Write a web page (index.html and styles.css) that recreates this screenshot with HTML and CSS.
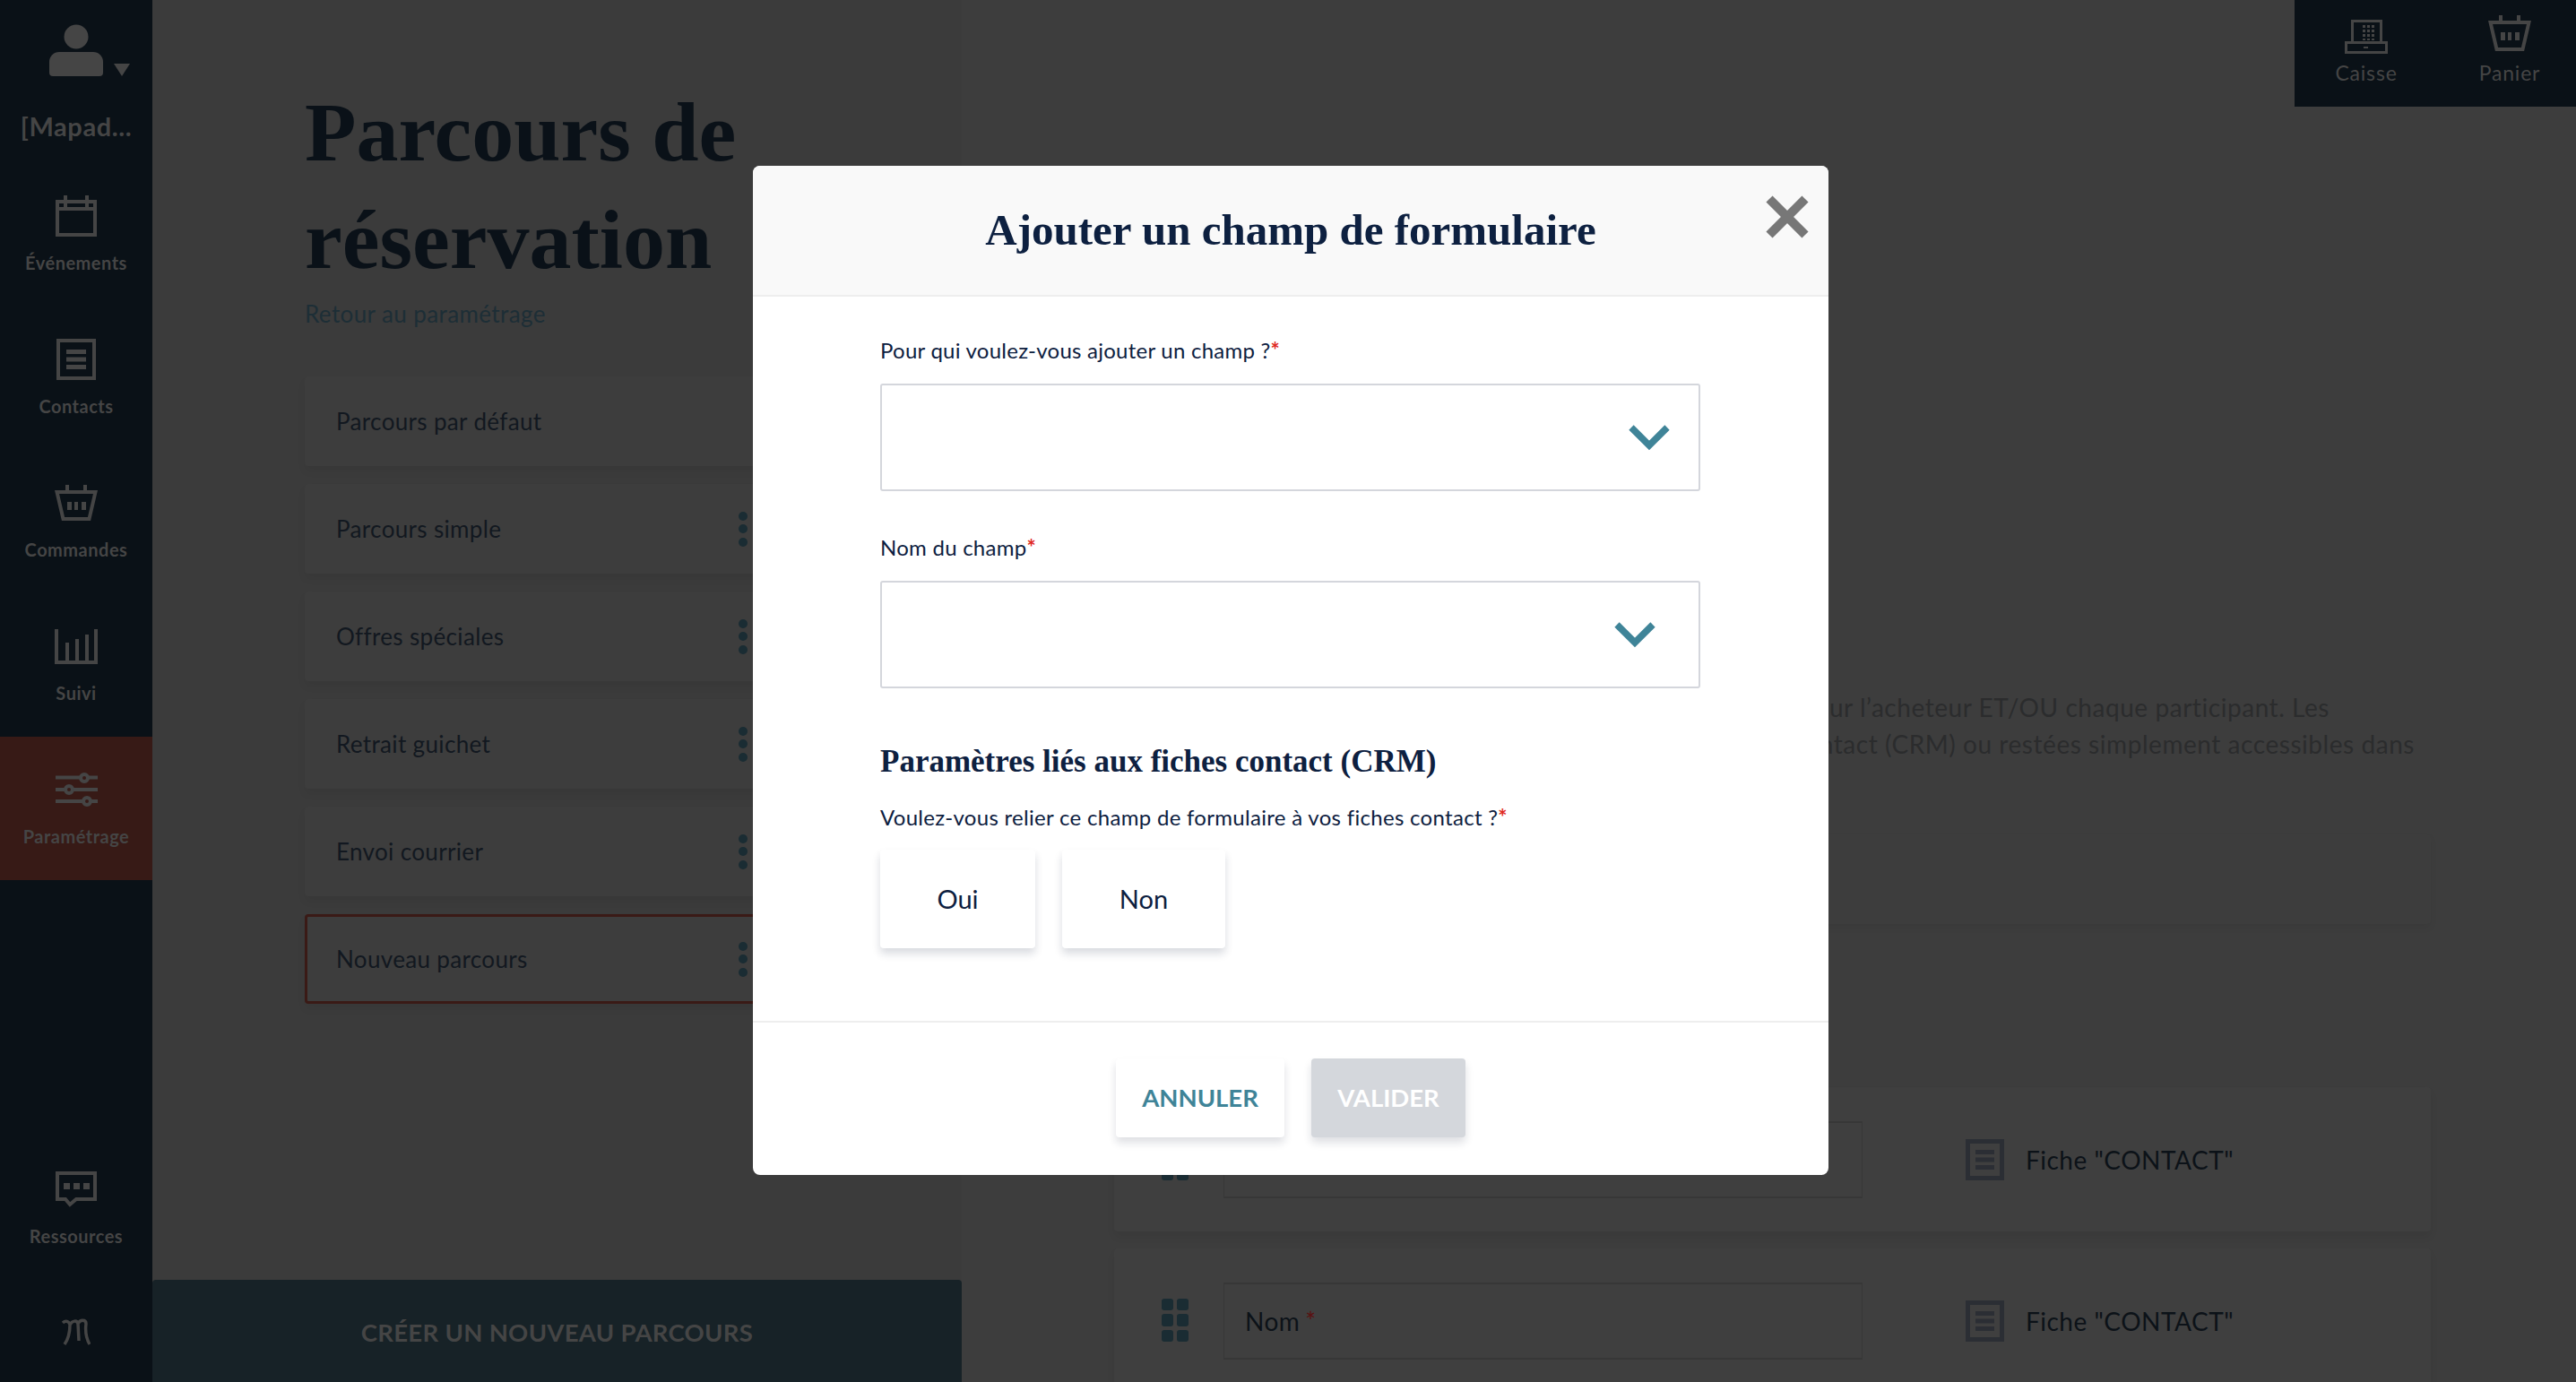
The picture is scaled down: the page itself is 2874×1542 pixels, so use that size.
FILE: index.html
```html
<!DOCTYPE html>
<html lang="fr">
<head>
<meta charset="utf-8">
<title>Parcours de réservation</title>
<link rel="stylesheet" href="styles.css">
</head>
<body>
<div class="app">
  <aside class="sidebar">
    <div class="user">
      <div class="avatar">
        <svg width="92" height="58" viewBox="0 0 92 58"><circle cx="30" cy="14" r="13.500" class="fill"/><path class="fill" d="M11 31h38a11 11 0 0 1 11 11v12a4 4 0 0 1-4 4H4a4 4 0 0 1-4-4V42a11 11 0 0 1 11-11z"/><path class="fill" d="M72 44h18l-9 14z"/></svg>
      </div>
      <div class="user-name">[Mapad...</div>
    </div>
    <a class="nav-item"><span class="nav-icon"><svg width="46" height="46" viewBox="0 0 46 46"><rect x="2" y="7" width="42" height="37" class="line"/><path class="line" d="M2 15h42M11 0v14M35 0v14"/></svg></span><span class="nav-label">Événements</span></a>
    <a class="nav-item"><span class="nav-icon"><svg width="44" height="46" viewBox="0 0 44 46"><rect x="2" y="2" width="40" height="42" class="line"/><path class="fill" d="M11 12h22v5H11zM11 20.500h22v5H11zM11 29h22v5H11z"/></svg></span><span class="nav-label">Contacts</span></a>
    <a class="nav-item"><span class="nav-icon"><svg width="48" height="40" viewBox="0 0 48 40"><path class="line" d="M2.500 8h43l-7 30h-29z"/><path class="line" d="M14 0v8M34 0v8"/><path class="fill" d="M14 19h5v9h-5zM22 19h4v9h-4zM30 19h5v9h-5z"/></svg></span><span class="nav-label">Commandes</span></a>
    <a class="nav-item"><span class="nav-icon"><svg width="48" height="39" viewBox="0 0 48 39"><path class="line" d="M2 0v37h44V0M14 37V15M25 37V11M36 37V6"/></svg></span><span class="nav-label">Suivi</span></a>
    <a class="nav-item nav-active"><span class="nav-icon"><svg width="47" height="38" viewBox="0 0 47 38"><path class="line" d="M0 5.500h47M0 19h47M0 32h47"/><circle cx="32" cy="6" r="4" class="knob"/><circle cx="15" cy="19" r="4" class="knob"/><circle cx="35" cy="32" r="4" class="knob"/></svg></span><span class="nav-label">Paramétrage</span></a>
    <a class="nav-item nav-bottom"><span class="nav-icon"><svg width="46" height="40" viewBox="0 0 46 40"><path class="line" d="M2 2h42v29H23l-7 6-5-6H2z"/><path class="fill" d="M9 13h7v7H9zM20 13h7v7h-7zM31 13h7v7h-7z"/></svg></span><span class="nav-label">Ressources</span></a>
    <div class="logo"><svg width="32" height="31" viewBox="0 0 32 31"><path class="logo-line" d="M1 5C4 2 8 3 9 7C9 14 8 22 3 29M9 7C12 2 17 2 18 6L19 25M18 6C20 1 27 1 27 6C26 14 27 22 31 29"/></svg></div>
  </aside>

  <section class="list-panel">
    <div class="list-content">
      <h1 class="page-title">Parcours de réservation</h1>
      <a class="back-link">Retour au paramétrage</a>
      <ul class="journeys">
        <li class="journey">Parcours par défaut</li>
        <li class="journey">Parcours simple<span class="dots"><i></i><i></i><i></i></span></li>
        <li class="journey">Offres spéciales<span class="dots"><i></i><i></i><i></i></span></li>
        <li class="journey">Retrait guichet<span class="dots"><i></i><i></i><i></i></span></li>
        <li class="journey">Envoi courrier<span class="dots"><i></i><i></i><i></i></span></li>
        <li class="journey journey-selected">Nouveau parcours<span class="dots"><i></i><i></i><i></i></span></li>
      </ul>
    </div>
    <button class="create-btn">CRÉER UN NOUVEAU PARCOURS</button>
  </section>

  <section class="detail-panel">
    <div class="topbar">
      <a class="top-action top-action-till"><svg width="48" height="38" viewBox="0 0 48 38"><path class="line-thin" d="M8.500 26V1.500h32V26"/><rect x="1.500" y="25.500" width="45" height="11" class="line-thin"/><path class="fill" d="M20 6h3v3h-3zM25 6h3v3h-3zM30 6h3v3h-3zM20 11h3v3h-3zM25 11h3v3h-3zM30 11h3v3h-3zM20 16h3v3h-3zM25 16h3v3h-3zM30 16h3v3h-3zM20 21h3v2h-3zM25 21h3v2h-3zM30 21h3v2h-3zM21 30h5v2h-5z"/></svg><span>Caisse</span></a>
      <a class="top-action top-action-cart"><svg class="top-basket" width="48" height="40" viewBox="0 0 48 40"><path class="line" d="M2.500 8h43l-7 30h-29z"/><path class="line" d="M14 0v8M34 0v8"/><path class="fill" d="M14 19h5v9h-5zM22 19h4v9h-4zM30 19h5v9h-5z"/></svg><span>Panier</span></a>
    </div>
    <div class="detail-content">
      <p class="intro">
        <span class="intro-line intro-line-a">Ajoutez ici les champs à renseigner pour l’acheteur ET/OU chaque participant. Les</span>
        <span class="intro-line intro-line-b">données sont reliées aux fiches contact (CRM) ou restées simplement accessibles dans</span>
      </p>
      <div class="plain-card"></div>
      <div class="field-card">
        <span class="drag"><i></i><i></i><i></i><i></i><i></i><i></i></span>
        <div class="field-input">Prénom <em>*</em></div>
        <div class="field-type"><svg width="43" height="46" viewBox="0 0 43 46"><rect x="2.500" y="2.500" width="38" height="41" class="dark-line"/><path class="dark-fill" d="M11 12h21v5H11zM11 20.500h21v5H11zM11 29h21v5H11z"/></svg><span>Fiche "CONTACT"</span></div>
      </div>
      <div class="field-card">
        <span class="drag"><i></i><i></i><i></i><i></i><i></i><i></i></span>
        <div class="field-input">Nom <em>*</em></div>
        <div class="field-type"><svg width="43" height="46" viewBox="0 0 43 46"><rect x="2.500" y="2.500" width="38" height="41" class="dark-line"/><path class="dark-fill" d="M11 12h21v5H11zM11 20.500h21v5H11zM11 29h21v5H11z"/></svg><span>Fiche "CONTACT"</span></div>
      </div>
    </div>
  </section>
</div>

<div class="overlay">
  <div class="modal">
    <header class="modal-header">
      <h2 class="modal-title">Ajouter un champ de formulaire</h2>
      <svg class="modal-close" width="48" height="48" viewBox="0 0 48 48"><path d="M4 4l40 40M44 4L4 44"/></svg>
    </header>
    <div class="modal-body">
      <div class="form-field">
        <label class="form-label">Pour qui voulez-vous ajouter un champ ?<b>*</b></label>
        <div class="select select-first"><svg width="46" height="29" viewBox="0 0 46 29"><path d="M3 3l20 20L43 3"/></svg></div>
      </div>
      <div class="form-field">
        <label class="form-label">Nom du champ<b>*</b></label>
        <div class="select select-second"><svg width="46" height="29" viewBox="0 0 46 29"><path d="M3 3l20 20L43 3"/></svg></div>
      </div>
      <h3 class="section-title">Paramètres liés aux fiches contact (CRM)</h3>
      <p class="form-label question">Voulez-vous relier ce champ de formulaire à vos fiches contact ?<b>*</b></p>
      <div class="choices">
        <button class="choice choice-yes">Oui</button>
        <button class="choice choice-no">Non</button>
      </div>
    </div>
    <footer class="modal-footer">
      <button class="action action-cancel">ANNULER</button>
      <button class="action action-submit">VALIDER</button>
    </footer>
  </div>
</div>
</body>
</html>
```
FILE: styles.css
```css
* { box-sizing: border-box; }
html, body { margin: 0; height: 100%; overflow: hidden; }
body { font-family: "Lato", "Liberation Sans", sans-serif; background: #3d3d3d; }
ul { list-style: none; margin: 0; padding: 0; }
p, h1, h2, h3 { margin: 0; }
button { font-family: inherit; border: 0; cursor: pointer; }
svg { display: block; }

.fill { fill: #454545; }
.line { fill: none; stroke: #454545; stroke-width: 4; }
.line-thin { fill: none; stroke: #454545; stroke-width: 3; }
.knob { fill: #371a16; stroke: #454545; stroke-width: 4; }
.logo-line { fill: none; stroke: #454545; stroke-width: 3.500; }
.dark-line { fill: none; stroke: #2b2e34; stroke-width: 5; }
.dark-fill { fill: #2b2e34; }

.app { display: flex; width: 2874px; height: 1542px; }

/* Sidebar */
.sidebar { width: 170px; flex: none; background: #0a1117; display: flex; flex-direction: column; }
.user { flex: none; height: 182px; padding-top: 27px; display: flex; flex-direction: column; align-items: center; }
.avatar { width: 92px; align-self: flex-start; margin-left: 55px; }
.user-name { margin-top: 38px; font-size: 29px; line-height: 36px; font-weight: 700; color: #454545; letter-spacing: .6px; }
.nav-item { flex: none; height: 160px; padding-top: 34px; display: flex; flex-direction: column; align-items: center; }
.nav-icon { height: 50px; display: flex; align-items: center; justify-content: center; }
.nav-label { margin-top: 15px; font-size: 20px; line-height: 24px; font-weight: 700; color: #454545; letter-spacing: .5px; white-space: nowrap; }
.nav-active { background: #371a16; }
.nav-bottom { margin-top: auto; padding-top: 32px; }
.logo { flex: none; height: 112px; display: flex; align-items: center; justify-content: center; }

/* List panel */
.list-panel { width: 903px; flex: none; background: #3b3b3b; display: flex; flex-direction: column; }
.list-content { flex: 1; padding: 87px 0 0 170px; }
.page-title { width: 560px; font-family: "Liberation Serif", serif; font-weight: 700; font-size: 94px; line-height: 120px; color: #0a1118; }
.back-link { display: block; margin-top: 5px; font-size: 26px; line-height: 36px; color: #1d2e36; letter-spacing: .4px; }
.journeys { margin-top: 52px; display: flex; flex-direction: column; gap: 20px; }
.journey { width: 510px; height: 100px; padding: 0 16px 0 35px; display: flex; align-items: center; justify-content: space-between; background: #3d3d3d; border-radius: 4px; box-shadow: 0 6px 10px rgba(0,0,0,.05); font-size: 26px; color: #121820; letter-spacing: .35px; }
.journey-selected { border: 3px solid #3a1a16; padding-left: 32px; padding-right: 13px; }
.dots { display: flex; flex-direction: column; gap: 4.500px; }
.dots i { display: block; width: 10px; height: 10px; border-radius: 50%; background: #1a2c33; }
.create-btn { flex: none; height: 114px; width: 100%; padding-top: 4px; background: #172227; color: #454545; font-size: 27.500px; font-weight: 700; border-radius: 4px 4px 0 0; letter-spacing: .3px; }

/* Detail panel */
.detail-panel { flex: 1; display: flex; flex-direction: column; }
.topbar { flex: none; align-self: flex-end; width: 314px; height: 119px; background: #0a1117; display: flex; }
.top-action { padding-top: 17px; display: flex; flex-direction: column; align-items: center; font-size: 23px; line-height: 28px; color: #454545; letter-spacing: .8px; }
.top-action-till { width: 160px; }
.top-action-cart { width: 154px; padding-left: 6px; }
.top-action svg { margin-top: 5px; height: 38px; }
.top-action span { margin-top: 7px; }
.top-action .top-basket { margin-top: 0; height: 40px; margin-bottom: 3px; }
.detail-content { flex: none; margin: 650px 162px 0 170px; display: flex; flex-direction: column; }
.intro { flex: none; font-size: 28px; line-height: 41px; color: #2b2c2d; letter-spacing: .55px; }
.intro-line { display: block; white-space: nowrap; text-align: right; }
.intro-line-a { padding-right: 113px; }
.intro-line-b { padding-right: 18px; }
.plain-card { flex: none; height: 100px; margin-top: 80px; border-radius: 4px; background: #3d3d3d; box-shadow: 0 4px 8px rgba(0,0,0,.05); }
.field-card { flex: none; height: 161px; margin-top: 19px; padding: 38px 0 0 53px; display: flex; align-items: flex-start; background: #3f3f3f; border-radius: 4px; box-shadow: 0 6px 10px rgba(0,0,0,.06); }
.plain-card + .field-card { margin-top: 182px; }
.drag { width: 30px; height: 48px; margin-top: 18px; display: grid; grid-template-columns: 13px 13px; column-gap: 4px; row-gap: 4px; }
.drag i { display: block; background: #1a2c33; border-radius: 3px; }
.field-input { width: 713px; height: 86px; margin-left: 39px; padding-left: 23px; display: flex; align-items: center; gap: 6px; border: 1px solid #373737; border-width: 2px 1px; font-size: 28px; color: #0c1218; letter-spacing: .5px; }
.field-input em { font-style: normal; color: #5a1010; }
.field-type { height: 86px; margin-left: 115px; display: flex; align-items: center; gap: 24px; font-size: 28px; color: #0c1218; letter-spacing: .5px; }

/* Modal */
.overlay { position: absolute; top: 0; left: 0; width: 2874px; height: 1542px; padding: 185px 0 0 840px; }
.modal { position: relative; width: 1200px; height: 1126px; background: #fff; border-radius: 8px; overflow: hidden; }
.modal-header { height: 146px; background: #f9f9f9; border-bottom: 2px solid #eee; display: flex; align-items: center; justify-content: center; }
.modal-title { font-family: "Liberation Serif", serif; font-weight: 700; font-size: 49px; line-height: 60px; color: #0d2040; }
.modal-close { position: absolute; top: 33px; right: 22px; }
.modal-close path { fill: none; stroke: #777; stroke-width: 10; }
.modal-body { height: 808px; padding: 45px 143px 0 142px; }
.form-field { margin-bottom: 48px; }
.form-label { display: block; font-size: 24px; line-height: 30px; color: #0d2040; letter-spacing: .25px; }
.form-label b { font-weight: 700; color: #e0291f; }
.select { height: 120px; margin-top: 22px; display: flex; align-items: center; justify-content: flex-end; border: 2px solid #d4d6dc; border-radius: 3px; }
.select svg path { fill: none; stroke: #3f8498; stroke-width: 7.500; }
.select-first { padding-right: 32px; }
.select-second { padding-right: 48px; }
.section-title { margin-top: 60px; font-family: "Liberation Serif", serif; font-weight: 700; font-size: 35px; line-height: 44px; color: #0d2040; }
.question { margin-top: 25px; letter-spacing: .3px; }
.choices { margin-top: 21px; display: flex; gap: 30px; }
.choice { height: 110px; padding-bottom: 2px; background: #fff; border-radius: 4px; box-shadow: 0 6px 10px rgba(20,30,60,.16); font-size: 29px; color: #0d2040; }
.choice-yes { width: 173px; }
.choice-no { width: 182px; }
.modal-footer { height: 172px; padding-top: 40px; border-top: 2px solid #eee; display: flex; justify-content: center; gap: 30px; }
.action { height: 88px; padding-bottom: 2px; border-radius: 4px; font-size: 27.500px; font-weight: 700; box-shadow: 0 6px 10px rgba(20,30,60,.14); }
.action-cancel { width: 188px; background: #fff; color: #3f8498; }
.action-submit { width: 172px; background: #d4d7dc; color: #fff; }
```
